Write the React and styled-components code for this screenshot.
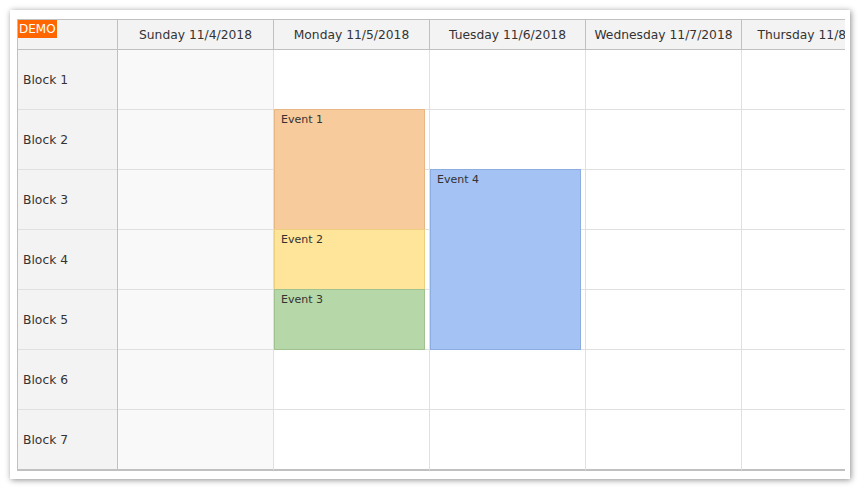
import React from 'react';
import styled, {createGlobalStyle} from 'styled-components';

const GlobalStyle = createGlobalStyle`
    html, body {
        margin: 0;
        padding: 0;
        background: #ffffff;
    }
    body {
        font-family: "DejaVu Sans", Verdana, sans-serif;
        color: #333333;
    }
    * {
        box-sizing: border-box;
    }
`;

const Page = styled.div`
    width: 860px;
    height: 489px;
    padding: 10px 10px 10px 10px;
`;

const Card = styled.div`
    width: 840px;
    height: 469px;
    background: #ffffff;
    box-shadow: 1px 1px 6px rgba(0, 0, 0, 0.45);
    padding: 9px 5px 9px 7px;
`;

const Scheduler = styled.div`
    display: flex;
    width: 828px;
    border-left: 1px solid #c0c0c0;
    border-top: 1px solid #c0c0c0;
    font-size: 12.3px;
`;

const RowHeaders = styled.div`
    display: flex;
    flex-direction: column;
    width: 100px;
    flex: none;
    border-right: 1px solid #c0c0c0;
    background: #f3f3f3;
`;

const Corner = styled.div`
    position: relative;
    height: 30px;
    border-bottom: 1px solid #c0c0c0;
`;

const Demo = styled.span`
    position: absolute;
    left: 0;
    top: 0;
    height: 18px;
    padding: 0 1px;
    background: #ff6600;
    color: #ffffff;
    font-size: 12px;
    line-height: 18px;
`;

const RowHeader = styled.div`
    display: flex;
    align-items: center;
    height: 60px;
    padding-left: 5px;
    border-bottom: 1px solid ${p => p.$last ? '#c0c0c0' : '#e0e0e0'};
    ${p => p.$last && 'border-bottom-width: 2px; height: 61px;'}
`;

const Viewport = styled.div`
    display: flex;
    flex: 1;
    overflow: hidden;
`;

const DayColumn = styled.div`
    display: flex;
    flex-direction: column;
    width: 156px;
    flex: none;
`;

const DayHeader = styled.div`
    display: flex;
    align-items: center;
    justify-content: center;
    height: 30px;
    background: #f3f3f3;
    border-right: 1px solid #c0c0c0;
    border-bottom: 1px solid #c0c0c0;
    white-space: nowrap;
    overflow: hidden;
`;

const DayBody = styled.div`
    position: relative;
`;

const Cell = styled.div`
    height: 60px;
    background: ${p => p.$weekend ? '#f9f9f9' : '#ffffff'};
    border-right: 1px solid #e0e0e0;
    border-bottom: 1px solid #e0e0e0;
    ${p => p.$last && 'border-bottom: 2px solid #c0c0c0; height: 61px;'}
`;

const Event = styled.div`
    position: absolute;
    left: 0;
    width: 151px;
    padding: 3px 6px;
    font-size: 11px;
    color: #333333;
    background: ${p => p.$bg};
    border: 1px solid ${p => p.$border};
`;

const blocks = ['Block 1', 'Block 2', 'Block 3', 'Block 4', 'Block 5', 'Block 6', 'Block 7'];

const days = [
    {name: 'Sunday 11/4/2018', weekend: true},
    {name: 'Monday 11/5/2018'},
    {name: 'Tuesday 11/6/2018'},
    {name: 'Wednesday 11/7/2018'},
    {name: 'Thursday 11/8/2018'},
];

const events = [
    {day: 1, start: 1, length: 2, text: 'Event 1', bg: '#f8cb9c', border: '#e6b684'},
    {day: 1, start: 3, length: 1, text: 'Event 2', bg: '#ffe59a', border: '#eccf7f'},
    {day: 1, start: 4, length: 1, text: 'Event 3', bg: '#b6d7a8', border: '#9fc290'},
    {day: 2, start: 2, length: 3, text: 'Event 4', bg: '#a4c2f4', border: '#8caddf'},
];

export default function App() {
    return <Page>
        <GlobalStyle/>
        <Card>
            <Scheduler>
                <RowHeaders>
                    <Corner><Demo>DEMO</Demo></Corner>
                    {blocks.map((b, i) =>
                        <RowHeader key={b} $last={i === blocks.length - 1}>{b}</RowHeader>
                    )}
                </RowHeaders>
                <Viewport>
                    {days.map((d, di) =>
                        <DayColumn key={d.name}>
                            <DayHeader>{d.name}</DayHeader>
                            <DayBody>
                                {blocks.map((b, i) =>
                                    <Cell key={b} $weekend={d.weekend} $last={i === blocks.length - 1}/>
                                )}
                                {events.filter(e => e.day === di).map(e =>
                                    <Event
                                        key={e.text}
                                        $bg={e.bg}
                                        $border={e.border}
                                        style={{top: e.start * 60 - 1, height: e.length * 60 + 1}}
                                    >
                                        {e.text}
                                    </Event>
                                )}
                            </DayBody>
                        </DayColumn>
                    )}
                </Viewport>
            </Scheduler>
        </Card>
    </Page>;
}
